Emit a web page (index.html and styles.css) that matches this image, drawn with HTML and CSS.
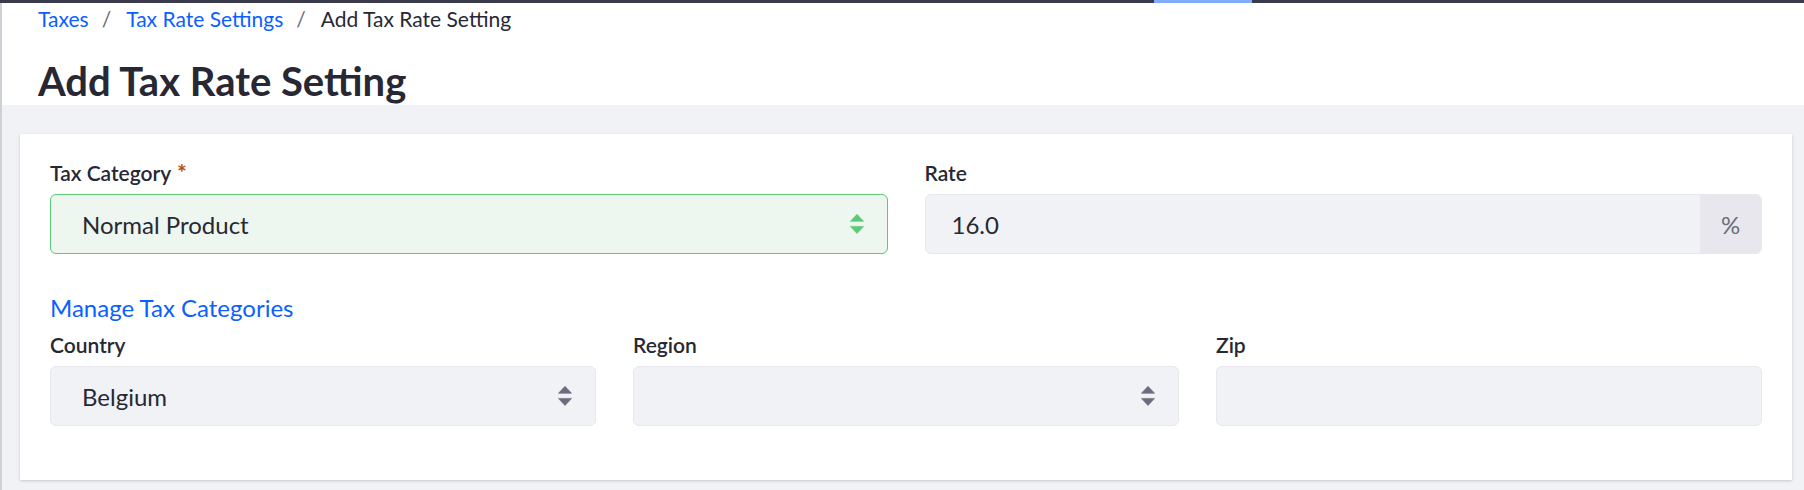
FILE: index.html
```html
<!DOCTYPE html>
<html lang="en">
<head>
<meta charset="utf-8">
<title>Add Tax Rate Setting</title>
<link rel="stylesheet" href="styles.css">
</head>
<body>
<div class="topbar"><div class="progress"></div></div>
<div class="page">
  <header class="header">
    <nav class="breadcrumb">
      <a class="crumb-link" href="#">Taxes</a>
      <span class="sep">/</span>
      <a class="crumb-link" href="#">Tax Rate Settings</a>
      <span class="sep">/</span>
      <span class="crumb-active">Add Tax Rate Setting</span>
    </nav>
    <h1 class="title">Add Tax Rate Setting</h1>
  </header>
  <main class="main">
    <section class="card">
      <div class="row row-2">
        <div class="group">
          <div class="label">Tax Category <span class="req">*</span></div>
          <div class="control select success">
            <span class="value">Normal Product</span>
            <svg class="arrows" width="14" height="20" viewBox="0 0 14 20"><path d="M7 0.3 L13.6 7.3 L0.4 7.3 Z" fill="currentColor" stroke="currentColor" stroke-width="0.6" stroke-linejoin="round"/><path d="M0.4 12.4 L13.6 12.4 L7 19.6 Z" fill="currentColor" stroke="currentColor" stroke-width="0.6" stroke-linejoin="round"/></svg>
          </div>
        </div>
        <div class="group">
          <div class="label">Rate</div>
          <div class="control input-group">
            <span class="value input-value">16.0</span>
            <span class="addon">%</span>
          </div>
        </div>
      </div>
      <a class="manage" href="#">Manage Tax Categories</a>
      <div class="row row-3">
        <div class="group">
          <div class="label">Country</div>
          <div class="control select">
            <span class="value">Belgium</span>
            <svg class="arrows" width="14" height="20" viewBox="0 0 14 20"><path d="M7 0.3 L13.6 7.3 L0.4 7.3 Z" fill="currentColor" stroke="currentColor" stroke-width="0.6" stroke-linejoin="round"/><path d="M0.4 12.4 L13.6 12.4 L7 19.6 Z" fill="currentColor" stroke="currentColor" stroke-width="0.6" stroke-linejoin="round"/></svg>
          </div>
        </div>
        <div class="group">
          <div class="label">Region</div>
          <div class="control select">
            <span class="value"></span>
            <svg class="arrows" width="14" height="20" viewBox="0 0 14 20"><path d="M7 0.3 L13.6 7.3 L0.4 7.3 Z" fill="currentColor" stroke="currentColor" stroke-width="0.6" stroke-linejoin="round"/><path d="M0.4 12.4 L13.6 12.4 L7 19.6 Z" fill="currentColor" stroke="currentColor" stroke-width="0.6" stroke-linejoin="round"/></svg>
          </div>
        </div>
        <div class="group">
          <div class="label">Zip</div>
          <div class="control input"></div>
        </div>
      </div>
    </section>
  </main>
</div>
</body>
</html>
```
FILE: styles.css
```css
* { box-sizing: border-box; }
html, body { margin: 0; padding: 0; }
body {
  width: 1804px;
  height: 490px;
  overflow: hidden;
  font-family: Lato, "Noto Sans", "Liberation Sans", sans-serif;
  color: #272833;
  background: #f1f2f5;
}
.topbar {
  height: 3px;
  background: #393a4b;
}
.progress {
  margin-left: 1154px;
  width: 98px;
  height: 3px;
  background: #80acff;
}
.page {
  border-left: 2px solid #cfd0d6;
  height: 487px;
  display: flex;
  flex-direction: column;
}
.header {
  background: #fff;
  padding: 0 0 0 36px;
  height: 102px;
}
.breadcrumb {
  display: flex;
  align-items: baseline;
  font-size: 21px;
  line-height: 32px;
}
.crumb-link { color: #0b5fff; text-decoration: none; }
.sep { color: #6b6c7e; margin: 0 13px 0 13px; }
.sep + .crumb-link, .sep + .crumb-active { margin-left: 2px; }
.crumb-active { color: #272833; }
.title {
  margin: 22px 0 0 0;
  font-size: 40px;
  line-height: 48px;
  font-weight: 700;
  color: #272833;
}
.main {
  flex: 1;
  padding: 29px 12px 10px 18px;
}
.card {
  background: #fff;
  height: 346px;
  padding: 23px 30px 0 30px;
  box-shadow: 0 1px 3px rgba(39, 40, 51, 0.22);
  border-radius: 1px;
}
.row { display: grid; column-gap: 37px; }
.row-2 { grid-template-columns: 1fr 1fr; }
.row-3 { grid-template-columns: 1fr 1fr 1fr; }
.label {
  font-size: 21px;
  line-height: 32px;
  height: 32px;
  font-weight: 600;
  margin-bottom: 5px;
  color: #272833;
}
.req {
  color: #b95000;
  font-weight: 700;
  font-size: 23px;
  line-height: 0;
  margin-left: 1px;
}
.control {
  height: 60px;
  border: 1px solid #e7e7ed;
  background: #f1f2f5;
  border-radius: 6px;
  display: flex;
  align-items: center;
  font-size: 24px;
  color: #272833;
}
.select { padding: 0 23px 0 31px; justify-content: space-between; }
.select .arrows { color: #6b6c7e; flex: none; }
.success { border-color: #5aca75; background: #edf7ef; }
.success .arrows { color: #5aca75; }
.input-group { padding: 0; overflow: hidden; }
.input-value { flex: 1; padding-left: 26px; }
.addon {
  width: 61px;
  height: 100%;
  background: #e7e7ed;
  color: #6b6c7e;
  display: flex;
  align-items: center;
  justify-content: center;
}
.manage {
  display: block;
  width: max-content;
  margin: 36px 0 3px 0;
  font-size: 24px;
  line-height: 36px;
  color: #0b5fff;
  text-decoration: none;
}
```
